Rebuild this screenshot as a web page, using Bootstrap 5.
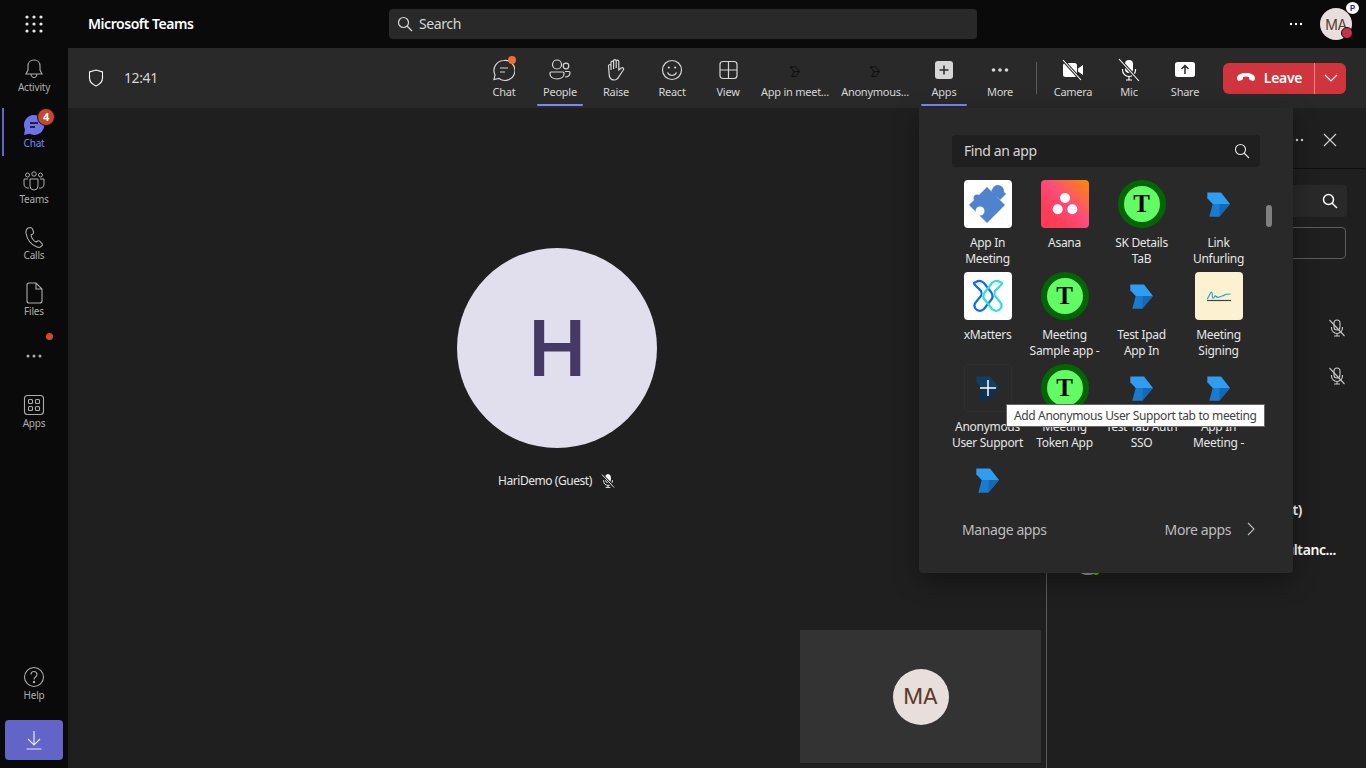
<!DOCTYPE html>
<html lang="en">
<head>
  <meta charset="UTF-8">
  <title>Microsoft Teams</title>
  <link href="https://cdn.jsdelivr.net/npm/bootstrap@5.3.3/dist/css/bootstrap.min.css" rel="stylesheet">
  <style>
    html, body { height: 100%; }
    body { background: #1f1f1f; color: #d6d6d6; font-family: "Noto Sans", "Liberation Sans", sans-serif; font-size: 14px; overflow: hidden; letter-spacing: -.4px; }
    svg { display: block; }
    .shell { width: 1366px; height: 768px; }

    .topbar { height: 48px; background: #0a0a0a; }
    .waffle { width: 68px; }
    .brand { width: 321px; padding: 0 0 2px 20px; color: #fff; font-weight: 600; font-size: 14px; letter-spacing: -.45px; }
    .top-search { width: 588px; height: 30px; background: #292929; border-radius: 4px; padding: 0 0 0 8px; gap: 6px; }
    .top-search span { padding-bottom: 2px; }
    .top-right { margin-left: auto; gap: 16px; padding-right: 14px; }
    .me { width: 32px; height: 32px; background: #e8dedb; color: #5c3b2b; font-family: Inter, sans-serif; font-size: 14px; }
    .me-status { right: -1px; bottom: 1px; width: 12px; height: 12px; background: #c4314b; border: 1px solid #0a0a0a; }
    .me-plan { right: -7px; top: -6px; width: 13px; height: 12px; background: #fff; color: #3b1f9c; font-size: 8px; font-weight: 700; line-height: 12px; }

    .rail { width: 68px; background: #0a0a0a; flex: none; }
    .rail-item { height: 56px; padding-top: 10px; color: #adadad; font-size: 10px; line-height: 14px; text-decoration: none; letter-spacing: -.2px; }
    .rail-item.on { color: #7f85f5; }
    .rail-item.on::before { content: ""; position: absolute; left: 2px; top: 4px; bottom: 4px; width: 2px; background: #6264c7; }
    .rail-badge { left: 37px; top: 4px; width: 18px; height: 18px; background: #c8472c; border: 1px solid #14142a; color: #fff; font-size: 11px; font-weight: 700; line-height: 16px; }
    .rail-dot { left: 46px; top: 5px; width: 7px; height: 7px; background: #d9472b; }
    .get-app { width: 58px; height: 40px; margin: 7px 0 8px 5px; background: #6264c7; border-radius: 4px; }

    .toolbar { height: 60px; background: #292929; flex: none; padding: 0 20px; }
    .clock { margin-left: 20px; padding-bottom: 2px; color: #d6d6d6; }
    .tool { width: 56px; height: 60px; padding-top: 10px; font-size: 11px; line-height: 16px; color: #d6d6d6; letter-spacing: -.25px; }
    .tool svg { margin-bottom: 2px; height: 24px; }
    .tool.wide-a { width: 78px; }
    .tool.wide-b { width: 82px; }
    .tool.on::after { content: ""; position: absolute; left: 5px; right: 5px; bottom: 2px; height: 2px; background: #7f85f5; border-radius: 1px; }
    .tool-dot { left: 32px; top: 8px; width: 8px; height: 8px; background: #e9703a; }
    .tool-sep { width: 1px; height: 32px; margin: 0 8px; background: #5c5c5c; }
    .leave-wrap { margin-left: 10px; }
    .leave-btn { background: #d0343c; border: 0; color: #fff; height: 31px; font-size: 14px; font-weight: 600; padding: 0 12px 2px; letter-spacing: -.3px; }
    .leave-btn:first-child { width: 92px; }
    .leave-btn:last-child { width: 32px; padding: 0; border-left: 1px solid #e6878c; }

    .stage { min-height: 0; }
    .video { width: 978px; flex: none; padding-top: 140px; }
    .big-avatar { width: 200px; height: 200px; background: #e1dfee; color: #453a66; font-family: Inter, sans-serif; font-weight: 600; font-size: 77px; line-height: 1; }
    .guest { margin-top: 24px; gap: 8px; font-size: 12px; color: #e6e6e6; letter-spacing: -.45px; --mic-fill: #fff; --mic-cut: #1f1f1f; }
    .self-tile { right: 5px; bottom: 5px; width: 241px; height: 133px; background: #333; }
    .self-avatar { width: 56px; height: 56px; background: #e8dedb; color: #5c3b2b; font-family: Inter, sans-serif; font-size: 22px; }

    .side { border-left: 1px solid #5c5c5c; color: #fff; }
    .side-head { height: 61px; border-bottom: 1px solid #0f0f0f; padding: 4px 29px 0 0; gap: 18px; }
    .side-search { height: 32px; margin: 16px 19px 0 24px; background: #292929; border-radius: 4px; padding-right: 9px; }
    .side-share { height: 32px; margin: 10px 20px 0 24px; border: 1px solid #5c5c5c; border-radius: 4px; }
    .side-row { height: 48px; padding-right: 19px; }
    .side-list { margin-top: 45px; }
    .side-name { height: 40px; line-height: 40px; text-align: right; font-size: 14px; font-weight: 600; }
    .side-name.one { margin-top: 90px; padding-right: 64px; }
    .side-name.two { padding-right: 30px; }
    .side-peek { height: 5px; overflow: hidden; padding-left: 25px; }

    .apps-pop { top: 0; right: 73px; width: 374px; height: 465px; background: #292929; border-radius: 0 0 4px 4px; box-shadow: 0 8px 24px rgba(0,0,0,.35); padding: 27px 33px 0 30px; }
    .apps-search { width: 308px; height: 32px; margin-left: 3px; background: #1f1f1f; border-radius: 4px; padding: 0 10px 0 12px; color: #d6d6d6; }
    .apps-search span { padding-bottom: 2px; }
    .apps-grid { display: grid; grid-template-columns: repeat(4, 77px); grid-auto-rows: 92px; margin-top: 13px; }
    .app-cell { font-size: 12px; line-height: 16px; color: #e6e6e6; text-align: center; letter-spacing: -.3px; }
    .app-pic { width: 48px; height: 48px; margin: 0 auto 7px; border-radius: 4px; }
    .app-white { background: #fff; }
    .app-asana { background: linear-gradient(45deg, #ff3d57 25%, #fb4d7c 55%, #ff8a00 100%); }
    .app-sign { background: #fcf2d2; }
    .app-hover { border: 1px solid #2f2f2f; }
    .app-t { border: 6px solid #056405; background: #63fb63; border-radius: 50%; color: #000; font-family: "Liberation Serif", serif; font-weight: 700; font-size: 25px; line-height: 36px; }
    .apps-thumb { left: 347px; top: 97px; width: 6px; height: 22px; background: #808080; border-radius: 3px; }
    .apps-foot { left: 43px; right: 38px; top: 411px; height: 20px; color: #bdbdbd; }
    .add-tip { left: 87px; top: 296px; height: 23px; padding: 0 7px; background: #fff; border: 1px solid #666; color: #424242; font-size: 12px; line-height: 21px; white-space: nowrap; letter-spacing: -.36px; }
  </style>
</head>
<body>

<svg width="0" height="0" class="position-absolute">
  <defs>
    <symbol id="chevron" viewBox="0 0 48 48">
      <path d="M12.300 12.500H26L35 24H17.700l-5.400-5.700z" fill="#2f9df2"/>
      <path d="M17.700 24H35L24.300 36.700H14.300z" fill="#1a7ace"/>
      <path d="M25 24h10L24.300 36.700z" fill="#1468b4"/>
    </symbol>
    <symbol id="mic-off" viewBox="0 0 20 20">
      <g fill="none" stroke="currentColor" stroke-width="1.100">
        <rect x="7" y="2" width="6" height="10" rx="3" style="fill:var(--mic-fill, none)"/>
        <path d="M4.500 9v1a5.500 5.500 0 0 0 11 0V9M10 15.500V18M7 18h6"/>
        <path d="M2.500 2l15 16" stroke-width="3.200" style="stroke:var(--mic-cut, transparent)"/>
        <path d="M2.500 2l15 16"/>
      </g>
    </symbol>
    <symbol id="app-mini" viewBox="0 0 20 20">
      <path d="M4 4h7l5 6-5 6H6l3-6zM4 4l5 6h7" fill="none" stroke="#0d0d0d" stroke-width="1.200"/>
    </symbol>
  </defs>
</svg>

<div class="shell d-flex flex-column">

  <header class="topbar d-flex align-items-center flex-none">
    <div class="waffle d-flex justify-content-center">
      <svg width="18" height="18" viewBox="0 0 18 18" fill="#e6e6e6">
        <circle cx="2" cy="2" r="1.600"/><circle cx="9" cy="2" r="1.600"/><circle cx="16" cy="2" r="1.600"/>
        <circle cx="2" cy="9" r="1.600"/><circle cx="9" cy="9" r="1.600"/><circle cx="16" cy="9" r="1.600"/>
        <circle cx="2" cy="16" r="1.600"/><circle cx="9" cy="16" r="1.600"/><circle cx="16" cy="16" r="1.600"/>
      </svg>
    </div>
    <div class="brand">Microsoft Teams</div>
    <div class="top-search d-flex align-items-center">
      <svg width="16" height="16" viewBox="0 0 16 16" fill="none" stroke="#d6d6d6" stroke-width="1.200"><circle cx="6.500" cy="6.500" r="5"/><path d="M10 10l5 5"/></svg>
      <span>Search</span>
    </div>
    <div class="top-right d-flex align-items-center">
      <svg width="16" height="4" viewBox="0 0 16 4" fill="#fff"><circle cx="3" cy="2" r="1.200"/><circle cx="8" cy="2" r="1.200"/><circle cx="13" cy="2" r="1.200"/></svg>
      <div class="me position-relative rounded-circle d-flex align-items-center justify-content-center">MA
        <span class="me-status position-absolute rounded-circle"></span>
        <span class="me-plan position-absolute rounded-circle text-center">P</span>
      </div>
    </div>
  </header>

  <div class="d-flex flex-grow-1" style="min-height:0">

    <nav class="rail d-flex flex-column">
      <a class="rail-item position-relative d-flex flex-column align-items-center">
        <svg width="22" height="22" viewBox="0 0 22 22" fill="none" stroke="#adadad" stroke-width="1.100"><path d="M11 2c-4 0-6 3-6 6v4l-2 4h16l-2-4V8c0-3-2-6-6-6zM8 16c0 2 1.500 3.500 3 3.500s3-1.500 3-3.500"/></svg>
        Activity
      </a>
      <a class="rail-item on position-relative d-flex flex-column align-items-center">
        <svg width="22" height="22" viewBox="0 0 22 22"><path d="M11 1a10 10 0 0 0-9 14.500L1 21l5.500-1.200A10 10 0 1 0 11 1z" fill="#6f73e8"/><path d="M7 9h8M7 13h5" stroke="#0a0a0a" stroke-width="1.500"/></svg>
        Chat
        <span class="rail-badge position-absolute rounded-circle text-center">4</span>
      </a>
      <a class="rail-item position-relative d-flex flex-column align-items-center">
        <svg width="22" height="22" viewBox="0 0 22 22" fill="none" stroke="#adadad" stroke-width="1"><circle cx="11" cy="4" r="2.200"/><circle cx="4.500" cy="5" r="2"/><circle cx="17.500" cy="5" r="2"/><path d="M7 9h8v7a4 4 0 0 1-8 0zM5 9H1v5a4 4 0 0 0 5 4M17 9h4v5a4 4 0 0 1-5 4"/></svg>
        Teams
      </a>
      <a class="rail-item position-relative d-flex flex-column align-items-center">
        <svg width="22" height="22" viewBox="0 0 22 22" fill="none" stroke="#adadad" stroke-width="1.100"><path d="M5 2l2.500-.5c1 0 1.500.5 2 1.500l1 3c.2.800 0 1.500-.8 2L8 9c.5 3 2 5.500 5 7l1.500-1c.8-.5 1.500-.3 2.200.2l2.300 2.300c.6.700.5 1.500 0 2.200l-1.500 1.300c-1 .5-2.500.5-4-.2C8 18.500 4 13 3 7c-.3-2 .5-4 2-5z"/></svg>
        Calls
      </a>
      <a class="rail-item position-relative d-flex flex-column align-items-center">
        <svg width="22" height="22" viewBox="0 0 22 22" fill="none" stroke="#adadad" stroke-width="1.100"><path d="M4 3a2 2 0 0 1 2-2h7l6 6v12a2 2 0 0 1-2 2H6a2 2 0 0 1-2-2zM13 1v6h6"/></svg>
        Files
      </a>
      <a class="rail-item position-relative d-flex flex-column align-items-center" style="padding-top:26px">
        <svg width="18" height="4" viewBox="0 0 18 4" fill="#adadad"><circle cx="3" cy="2" r="1.500"/><circle cx="9" cy="2" r="1.500"/><circle cx="15" cy="2" r="1.500"/></svg>
        <span class="rail-dot position-absolute rounded-circle"></span>
      </a>
      <a class="rail-item position-relative d-flex flex-column align-items-center">
        <svg width="22" height="22" viewBox="0 0 22 22" fill="none" stroke="#adadad" stroke-width="1.100"><rect x="1.500" y="1.500" width="19" height="19" rx="3"/><rect x="5.500" y="5.500" width="4" height="4" rx="1"/><rect x="12.500" y="5.500" width="4" height="4" rx="1"/><rect x="5.500" y="12.500" width="4" height="4" rx="1"/><rect x="12.500" y="12.500" width="4" height="4" rx="1"/></svg>
        Apps
      </a>
      <a class="rail-item position-relative d-flex flex-column align-items-center mt-auto" style="padding-top:9px">
        <svg width="22" height="22" viewBox="0 0 22 22" fill="none" stroke="#adadad" stroke-width="1.100"><circle cx="11" cy="11" r="9.500"/><path d="M8 8.500C8 6.500 9.500 5.500 11 5.500S14 6.500 14 8.500c0 2.500-3 2.500-3 5"/><circle cx="11" cy="16" r=".7" fill="#adadad"/></svg>
        Help
      </a>
      <div class="get-app d-flex align-items-center justify-content-center">
        <svg width="16" height="20" viewBox="0 0 16 20" fill="none" stroke="#e6e6f8" stroke-width="1.200"><path d="M8 1v14M2 9l6 6 6-6M.500 19h15"/></svg>
      </div>
    </nav>

    <main class="d-flex flex-column flex-grow-1" style="min-width:0">

      <div class="toolbar d-flex align-items-center">
        <svg width="16" height="18" viewBox="0 0 16 18" fill="none" stroke="#fff" stroke-width="1.100"><path d="M8 1l6.500 2v6c0 4-3 6.500-6.500 8C4.500 15.500 1.500 13 1.500 9V3z"/></svg>
        <span class="clock">12:41</span>

        <div class="d-flex align-items-center ms-auto">
          <div class="tool position-relative d-flex flex-column align-items-center">
            <svg width="22" height="24" viewBox="0 0 22 24" fill="none" stroke="#d6d6d6" stroke-width="1.200"><path d="M11 2.500a10 10 0 0 0-9 14.300L1 21.500l5-1A10 10 0 1 0 11 2.500z"/><path d="M7 10h8M7 14h5"/></svg>
            Chat
            <span class="tool-dot position-absolute rounded-circle"></span>
          </div>
          <div class="tool on position-relative d-flex flex-column align-items-center">
            <svg width="22" height="24" viewBox="0 0 22 24" fill="none" stroke="#d6d6d6" stroke-width="1.200"><circle cx="8" cy="6.500" r="4.500"/><circle cx="17" cy="8" r="2.800"/><path d="M2 14h12a1 1 0 0 1 1 1v1c0 3-3 5-7 5s-7-2-7-5v-1a1 1 0 0 1 1-1zM16 13.500h4a1 1 0 0 1 1 1c0 3-2 4.500-5 4.500"/></svg>
            People
          </div>
          <div class="tool position-relative d-flex flex-column align-items-center">
            <svg width="22" height="24" viewBox="0 0 22 24" fill="none" stroke="#d6d6d6" stroke-width="1.200"><path d="M6 12V4.500a1.300 1.300 0 0 1 2.600 0V11M8.600 10V3a1.300 1.300 0 0 1 2.600 0v7M11.200 10V3.500a1.300 1.300 0 0 1 2.600 0V12l2.500-2c1.500-1 3 .5 2 2l-4 6c-1 2-2.500 4-5 4-3 0-4.500-2-5-4L3.500 8a1.300 1.300 0 0 1 2.500-.5"/></svg>
            Raise
          </div>
          <div class="tool position-relative d-flex flex-column align-items-center">
            <svg width="22" height="24" viewBox="0 0 22 24" fill="none" stroke="#d6d6d6" stroke-width="1.200"><circle cx="11" cy="12" r="9.500"/><path d="M6.500 14.500c1 2 2.800 3 4.500 3s3.500-1 4.500-3"/><circle cx="7.800" cy="9.500" r="1.100" fill="#d6d6d6" stroke="none"/><circle cx="14.200" cy="9.500" r="1.100" fill="#d6d6d6" stroke="none"/></svg>
            React
          </div>
          <div class="tool position-relative d-flex flex-column align-items-center">
            <svg width="22" height="24" viewBox="0 0 22 24" fill="none" stroke="#d6d6d6" stroke-width="1.200"><rect x="3" y="3.500" width="17" height="17" rx="3"/><path d="M11.500 3.500v17M3 12h17"/></svg>
            View
          </div>
          <div class="tool wide-a position-relative d-flex flex-column align-items-center">
            <svg width="16" height="24" viewBox="0 -2 20 24"><use href="#app-mini"/></svg>
            App in meet...
          </div>
          <div class="tool wide-b position-relative d-flex flex-column align-items-center">
            <svg width="16" height="24" viewBox="0 -2 20 24"><use href="#app-mini"/></svg>
            Anonymous...
          </div>
          <div class="tool on position-relative d-flex flex-column align-items-center">
            <svg width="20" height="24" viewBox="0 0 20 24"><rect x="1" y="3" width="18" height="18" rx="3" fill="#d6d6d6"/><path d="M10 7.500v9M5.500 12h9" stroke="#292929" stroke-width="1.500"/></svg>
            Apps
          </div>
          <div class="tool position-relative d-flex flex-column align-items-center">
            <svg width="20" height="24" viewBox="0 0 20 24" fill="#d6d6d6"><circle cx="3.500" cy="12" r="1.800"/><circle cx="10" cy="12" r="1.800"/><circle cx="16.500" cy="12" r="1.800"/></svg>
            More
          </div>
          <div class="tool-sep"></div>
          <div class="tool position-relative d-flex flex-column align-items-center">
            <svg width="22" height="24" viewBox="0 0 22 24"><rect x="1" y="5" width="14" height="14" rx="2.500" fill="#fff"/><path d="M16 10.500l5-3.500v10l-5-3.500z" fill="#fff"/><path d="M1 2l18 20" stroke="#292929" stroke-width="3"/><path d="M1 2l18 20" stroke="#fff" stroke-width="1.100"/></svg>
            Camera
          </div>
          <div class="tool position-relative d-flex flex-column align-items-center">
            <svg width="22" height="24" viewBox="0 0 22 24"><rect x="7" y="2" width="8" height="13" rx="4" fill="#fff"/><path d="M4.500 11v1a6.500 6.500 0 0 0 13 0v-1M11 18.500V22M8 22h6" fill="none" stroke="#fff" stroke-width="1.200"/><path d="M1 1l20 22" stroke="#292929" stroke-width="3"/><path d="M1 1l20 22" stroke="#fff" stroke-width="1.100"/></svg>
            Mic
          </div>
          <div class="tool position-relative d-flex flex-column align-items-center">
            <svg width="22" height="24" viewBox="0 0 22 24"><rect x="1" y="4" width="20" height="15" rx="2.500" fill="#fff"/><path d="M11 16V8M7.500 11L11 7.500l3.500 3.500" fill="none" stroke="#292929" stroke-width="1.500"/></svg>
            Share
          </div>
          <div class="btn-group leave-wrap">
            <button type="button" class="btn leave-btn d-flex align-items-center justify-content-center gap-2">
              <svg width="20" height="10" viewBox="0 0 20 10"><path d="M1 6c0-3 4-5 9-5s9 2 9 5c0 2-1 3-2 3l-3-1c-1-.5-1-1.500-1-3-2-.7-4-.7-6 0 0 1.500 0 2.500-1 3L3 9C2 9 1 8 1 6z" fill="#fff"/></svg>
              Leave
            </button>
            <button type="button" class="btn leave-btn d-flex align-items-center justify-content-center">
              <svg width="14" height="8" viewBox="0 0 14 8" fill="none" stroke="#fff" stroke-width="1.100"><path d="M1 1l6 6 6-6"/></svg>
            </button>
          </div>
        </div>
      </div>

      <div class="stage position-relative d-flex flex-grow-1">

        <section class="video position-relative d-flex flex-column align-items-center">
          <div class="big-avatar rounded-circle d-flex align-items-center justify-content-center">H</div>
          <div class="guest d-flex align-items-center">
            <span>HariDemo (Guest)</span>
            <svg width="16" height="16" viewBox="0 0 20 20" class="text-white"><use href="#mic-off"/></svg>
          </div>
          <div class="self-tile position-absolute d-flex align-items-center justify-content-center">
            <div class="self-avatar rounded-circle d-flex align-items-center justify-content-center">MA</div>
          </div>
        </section>

        <aside class="side flex-grow-1">
          <div class="side-head d-flex align-items-center justify-content-end">
            <svg width="16" height="4" viewBox="0 0 16 4" fill="#d6d6d6"><circle cx="3" cy="2" r="1.200"/><circle cx="8" cy="2" r="1.200"/><circle cx="13" cy="2" r="1.200"/></svg>
            <svg width="14" height="14" viewBox="0 0 14 14" fill="none" stroke="#d6d6d6" stroke-width="1.100"><path d="M1 1l12 12M13 1L1 13"/></svg>
          </div>
          <div class="side-search d-flex align-items-center justify-content-end">
            <svg width="16" height="16" viewBox="0 0 16 16" fill="none" stroke="#fff" stroke-width="1.500"><circle cx="6.500" cy="6.500" r="5"/><path d="M10 10l5 5"/></svg>
          </div>
          <div class="side-share"></div>
          <div class="side-list">
            <div class="side-row d-flex align-items-center justify-content-end"><svg width="20" height="20" class="text-white opacity-75"><use href="#mic-off"/></svg></div>
            <div class="side-row d-flex align-items-center justify-content-end"><svg width="20" height="20" class="text-white opacity-75"><use href="#mic-off"/></svg></div>
          </div>
          <div class="side-name one">HariDemo (Guest)</div>
          <div class="side-name two">Consultanc...</div>
          <div class="side-peek">
            <svg width="32" height="5" viewBox="0 27 32 5"><circle cx="16" cy="16" r="16" fill="#9aa09a"/><circle cx="24" cy="29" r="3" fill="#6bb700"/></svg>
          </div>
        </aside>

        <div class="apps-pop position-absolute">
          <div class="apps-search d-flex align-items-center justify-content-between">
            <span>Find an app</span>
            <svg width="16" height="16" viewBox="0 0 16 16" fill="none" stroke="#e6e6e6" stroke-width="1.100"><circle cx="6.500" cy="6.500" r="5"/><path d="M10 10l5 5"/></svg>
          </div>

          <div class="apps-grid">
            <div class="app-cell">
              <div class="app-pic app-white">
                <svg width="48" height="48" viewBox="0 0 48 48"><path d="M23 7l18 18-18 18L5 25z" fill="#4f84cc"/><circle cx="34" cy="11" r="6" fill="#4f84cc"/><path d="M27 11l9 9 6-6-9-9z" fill="#4f84cc"/><circle cx="16" cy="31" r="4.500" fill="#fff"/><circle cx="13" cy="18" r="3.500" fill="#4f84cc"/></svg>
              </div>
              App In<br>Meeting
            </div>
            <div class="app-cell">
              <div class="app-pic app-asana">
                <svg width="48" height="48" viewBox="0 0 48 48" fill="#fff"><circle cx="24" cy="18" r="5"/><circle cx="16.700" cy="29.300" r="5"/><circle cx="31.300" cy="29.300" r="5"/></svg>
              </div>
              Asana
            </div>
            <div class="app-cell">
              <div class="app-pic app-t">T</div>
              SK Details<br>TaB
            </div>
            <div class="app-cell">
              <svg class="app-pic" viewBox="0 0 48 48"><use href="#chevron"/></svg>
              Link<br>Unfurling
            </div>

            <div class="app-cell">
              <div class="app-pic app-white">
                <svg width="48" height="48" viewBox="0 0 48 48" fill="none" stroke-width="2.200"><path d="M12 10c3-2 6-1 8 1l7 9c2 3 2 6 0 8l-7 9c-3 3-7 2-9-1-1-2-1-4 1-6l5-6c1-2 1-3 0-5l-6-6c-2-2-1-2 1-3z" stroke="#0a6cf0"/><path d="M36 10c-3-2-6-1-8 1l-7 9c-2 3-2 6 0 8l7 9c3 3 7 2 9-1 1-2 1-4-1-6l-5-6c-1-2-1-3 0-5l6-6c2-2 1-2-1-3z" stroke="#2fe0d0"/></svg>
              </div>
              xMatters
            </div>
            <div class="app-cell">
              <div class="app-pic app-t">T</div>
              Meeting<br>Sample app -
            </div>
            <div class="app-cell">
              <svg class="app-pic" viewBox="0 0 48 48"><use href="#chevron"/></svg>
              Test Ipad<br>App In
            </div>
            <div class="app-cell">
              <div class="app-pic app-sign">
                <svg width="48" height="48" viewBox="0 0 48 48" fill="none"><path d="M12 27c2-1 3-7 4.500-7s0 7 2 6 1-3 2-2 2 2 4 1 4-1 5-2 3-1 6-1" stroke="#12a5d8" stroke-width="1.100"/><path d="M12 28.500h24" stroke="#444" stroke-width="1.200"/></svg>
              </div>
              Meeting<br>Signing
            </div>

            <div class="app-cell">
              <div class="app-pic app-hover">
                <svg width="46" height="46" viewBox="1 1 46 46"><path d="M12.300 12.500H26L35 24H17.700l-5.400-5.700z" fill="#123e63"/><path d="M17.700 24H35L24.300 36.700H14.300z" fill="#0e3150"/><path d="M24 16v16M16 24h16" stroke="#fff" stroke-width="1.500"/></svg>
              </div>
              Anonymous<br>User Support
            </div>
            <div class="app-cell">
              <div class="app-pic app-t">T</div>
              Meeting<br>Token App
            </div>
            <div class="app-cell">
              <svg class="app-pic" viewBox="0 0 48 48"><use href="#chevron"/></svg>
              Test Tab Auth<br>SSO
            </div>
            <div class="app-cell">
              <svg class="app-pic" viewBox="0 0 48 48"><use href="#chevron"/></svg>
              App In<br>Meeting -
            </div>

            <div class="app-cell">
              <svg class="app-pic" viewBox="0 0 48 48"><use href="#chevron"/></svg>
            </div>
          </div>

          <span class="apps-thumb position-absolute"></span>
          <div class="apps-foot position-absolute d-flex align-items-center justify-content-between">
            <span>Manage apps</span>
            <span class="d-flex align-items-center gap-3">More apps
              <svg width="8" height="14" viewBox="0 0 8 14" fill="none" stroke="#bdbdbd" stroke-width="1.100"><path d="M1 1l6 6-6 6"/></svg>
            </span>
          </div>
          <div class="add-tip position-absolute">Add Anonymous User Support tab to meeting</div>
        </div>

      </div>
    </main>
  </div>
</div>

<script src="https://cdn.jsdelivr.net/npm/bootstrap@5.3.3/dist/js/bootstrap.bundle.min.js"></script>
</body>
</html>
